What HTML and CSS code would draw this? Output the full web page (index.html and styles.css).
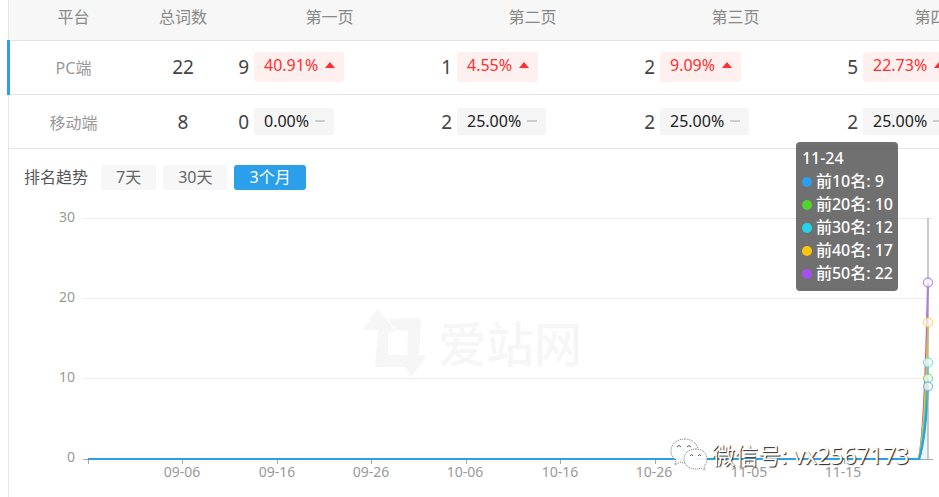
FILE: index.html
```html
<!DOCTYPE html>
<html lang="zh-CN">
<head>
    <meta charset="UTF-8">
    <meta name="viewport" content="width=device-width, initial-scale=1.0">
    <title>排名趋势</title>
    <link rel="stylesheet" href="styles.css">
</head>
<body>

<div class="panel">
    <div class="table-wrap">
        <table class="rank-table">
            <colgroup>
                <col class="col-platform">
                <col class="col-total">
                <col class="col-page">
                <col class="col-page">
                <col class="col-page">
                <col class="col-page">
            </colgroup>
            <thead>
                <tr>
                    <th>平台</th>
                    <th>总词数</th>
                    <th>第一页</th>
                    <th>第二页</th>
                    <th>第三页</th>
                    <th>第四页</th>
                </tr>
            </thead>
            <tbody>
                <tr class="active">
                    <td class="platform">PC端</td>
                    <td class="total">22</td>
                    <td><div class="cell"><span class="num">9</span><span class="tag up">40.91%<i class="arrow"></i></span></div></td>
                    <td><div class="cell"><span class="num">1</span><span class="tag up">4.55%<i class="arrow"></i></span></div></td>
                    <td><div class="cell"><span class="num">2</span><span class="tag up">9.09%<i class="arrow"></i></span></div></td>
                    <td><div class="cell"><span class="num">5</span><span class="tag up">22.73%<i class="arrow"></i></span></div></td>
                </tr>
                <tr>
                    <td class="platform">移动端</td>
                    <td class="total">8</td>
                    <td><div class="cell"><span class="num">0</span><span class="tag">0.00%<i class="dash"></i></span></div></td>
                    <td><div class="cell"><span class="num">2</span><span class="tag">25.00%<i class="dash"></i></span></div></td>
                    <td><div class="cell"><span class="num">2</span><span class="tag">25.00%<i class="dash"></i></span></div></td>
                    <td><div class="cell"><span class="num">2</span><span class="tag">25.00%<i class="dash"></i></span></div></td>
                </tr>
            </tbody>
        </table>
    </div>

    <div class="trend-bar">
        <span class="trend-title">排名趋势</span>
        <button type="button">7天</button>
        <button type="button">30天</button>
        <button type="button" class="current">3个月</button>
    </div>

    <div class="chart">
        <svg class="plot" viewBox="0 0 930 280">
            <!-- site logo behind the lines -->
            <g class="logo">
                <path d="M369 99 L387 122 L379 122 L379 145 L394 145 L401 157 L370 157 Q366 157 366 153 L369 120 L353 120 Z"/>
                <path d="M378 109 L410 108 Q413 109 412 113 L410 145 L418 146 L402 167 L391 145 L398 145 L399 121 L387 120 Z"/>
                <text x="429" y="152">爱站网</text>
            </g>

            <g class="grid">
                <path d="M74 8.500H924M74 88.500H924M74 168.500H924"/>
            </g>
            <path class="axis" d="M74 249.500H924M79.500 249v5M173.500 249v5M268.500 249v5M362.500 249v5M457.500 249v5M551.500 249v5M646.500 249v5M740.500 249v5M835.500 249v5"/>

            <g class="label y-label">
                <text x="66" y="12">30</text>
                <text x="66" y="92">20</text>
                <text x="66" y="172">10</text>
                <text x="66" y="252">0</text>
            </g>
            <g class="label x-label">
                <text x="173" y="267">09-06</text>
                <text x="268" y="267">09-16</text>
                <text x="362" y="267">09-26</text>
                <text x="456" y="267">10-06</text>
                <text x="551" y="267">10-16</text>
                <text x="645" y="267">10-26</text>
                <text x="740" y="267">11-05</text>
                <text x="834" y="267">11-15</text>
            </g>

            <path class="area" d="M910 249C914 238 917 222 919 177V249Z"/>
            <g class="line">
                <path stroke="#a74eee" d="M79 249H910C914 228 917 170 919 73"/>
                <path stroke="#fdc60a" d="M79 249H910C914 230 917 190 919 113"/>
                <path stroke="#21d6e8" d="M79 249H910C914 234 917 206 919 153"/>
                <path stroke="#54d22d" d="M79 249H910C914 236 917 218 919 169"/>
                <path stroke="#2b9fea" d="M79 249H910C914 238 917 222 919 177"/>
            </g>
            <path class="pointer" d="M919 8V249"/>
            <g class="dot">
                <circle stroke="#b25cf0" cx="919" cy="72.500" r="4.500"/>
                <circle stroke="#fdd32f" cx="919" cy="112.500" r="4.500"/>
                <circle stroke="#4adfee" cx="919" cy="152.500" r="4.500"/>
                <circle stroke="#6bd84a" cx="919" cy="168.500" r="4.500"/>
                <circle stroke="#4aaeee" cx="919" cy="176.500" r="4.500"/>
            </g>
        </svg>

        <div class="tooltip">
            <p>11-24</p>
            <ul>
                <li class="top10">前10名: 9</li>
                <li class="top20">前20名: 10</li>
                <li class="top30">前30名: 12</li>
                <li class="top40">前40名: 17</li>
                <li class="top50">前50名: 22</li>
            </ul>
        </div>

        <div class="wechat">
            <svg width="38" height="34" viewBox="0 0 38 34">
                <path class="bubble" d="M15 1C7 1 1 6 1 13c0 4 2 7 5 9l-1 5 5-3c2 1 4 1 6 1 7 0 12-5 12-12S22 1 15 1Z"/>
                <path class="bubble" d="M26 11c-7 0-12 4-12 10s5 10 12 10c2 0 3 0 5-1l4 2-1-4c2-2 3-4 3-7 0-6-5-10-11-10Z"/>
                <path class="eye" d="M7 9q2-3 4 0M17 9q2-3 4 0M20 18q2-3 3 0M28 18q2-3 3 0"/>
            </svg>
            <span>微信号: vx2567173</span>
        </div>
    </div>
</div>

</body>
</html>
```
FILE: styles.css
```css
* {
    box-sizing: border-box;
    margin: 0;
    padding: 0;
}

body {
    font-family: "Noto Sans", "Noto Sans CJK SC", sans-serif;
    font-size: 16px;
    background: #fff;
    color: #555;
    overflow-x: hidden;
}

.panel {
    margin-left: 8px;
    min-height: 100vh;
    border-left: 1px solid #e4e4e4;
}

/* the table is wider than the panel and gets cut on the right */
.table-wrap {
    margin-left: -2px;
    padding-left: 2px;
    overflow: hidden;
}

.rank-table {
    width: 1031px;
    table-layout: fixed;
    border-collapse: separate;
    border-spacing: 0;
}

.col-platform {
    width: 129px;
}

.col-total {
    width: 90px;
}

.col-page {
    width: 203px;
}

th {
    height: 41px;
    padding-bottom: 6px;
    background: #f7f7f7;
    border-bottom: 1px solid #e4e4e4;
    color: #888;
    font-weight: normal;
    line-height: 34px;
}

td {
    height: 54px;
    border-bottom: 1px solid #e4e4e4;
    vertical-align: middle;
}

.active td {
    padding-bottom: 2px;
}

.platform {
    position: relative;
    color: #999;
    text-align: center;
}

.active .platform::before {
    content: "";
    position: absolute;
    left: -2px;
    top: -1px;
    bottom: -1px;
    width: 3px;
    background: #2b9fea;
}

.total {
    color: #444;
    font-size: 19px;
    text-align: center;
}

.cell {
    display: flex;
    align-items: center;
    gap: 5px;
}

.num {
    width: 21px;
    color: #444;
    font-size: 19px;
    text-align: right;
}

.tag {
    display: flex;
    align-items: center;
    gap: 6px;
    padding: 0 9px 0 10px;
    background: #f5f5f5;
    border-radius: 3px;
    color: #222;
    line-height: 27px;
}

.tag.up {
    gap: 7px;
    padding-bottom: 3px;
    background: #fff0f0;
    color: #fd2f2f;
}

.arrow {
    border: 5px solid transparent;
    border-top: 0;
    border-bottom: 6px solid #fd2f2f;
}

.dash {
    width: 10px;
    height: 2px;
    margin-bottom: 2px;
    background: #ccc;
}

.trend-bar {
    display: flex;
    align-items: center;
    gap: 7px;
    padding: 16px 15px 20px;
}

.trend-title {
    margin-right: 6px;
    line-height: 25px;
}

button {
    height: 25px;
    padding: 0 15px;
    border: none;
    border-radius: 3px;
    background: #f7f7f7;
    color: #666;
    font: inherit;
    line-height: 25px;
    cursor: pointer;
}

button.current {
    background: #2b9fea;
    color: #fff;
}

.chart {
    position: relative;
}

.plot {
    display: block;
    width: 100%;
}

.logo {
    fill: #f6f6f6;
}

.logo text {
    font-size: 48px;
    font-weight: 500;
}

.grid {
    stroke: #ededed;
}

.axis {
    fill: none;
    stroke: #aaa;
}

.label {
    fill: #999;
    font-size: 14px;
}

.y-label {
    text-anchor: end;
}

.x-label {
    text-anchor: middle;
}

.area {
    fill: #2b9fea;
    opacity: 0.1;
}

.line {
    fill: none;
    stroke-width: 2;
}

.pointer {
    stroke: #aaa;
    stroke-width: 2;
    opacity: 0.6;
}

.dot {
    fill: #fff;
    fill-opacity: 0.7;
    stroke-width: 1;
}

.tooltip {
    position: absolute;
    top: -68px;
    right: 41px;
    padding: 5px 5px 6px 6px;
    background: rgba(80, 80, 80, 0.82);
    border-radius: 4px;
    color: #fff;
    font-weight: 500;
    line-height: 23px;
    white-space: nowrap;
}

.tooltip ul {
    list-style: none;
}

.tooltip li {
    display: flex;
    align-items: center;
    gap: 4px;
}

.tooltip li::before {
    content: "";
    width: 10px;
    height: 10px;
    border-radius: 5px;
    background: #2b9fea;
}

.tooltip .top20::before {
    background: #54d22d;
}

.tooltip .top30::before {
    background: #21d6e8;
}

.tooltip .top40::before {
    background: #fdc60a;
}

.tooltip .top50::before {
    background: #a74eee;
}

.wechat {
    position: absolute;
    right: 30px;
    bottom: 18px;
    display: flex;
    align-items: center;
    gap: 4px;
    color: #fff;
    font-size: 23px;
    line-height: 34px;
    text-shadow: 1px 1px 1px #222;
    white-space: nowrap;
}

.bubble {
    fill: #fff;
    fill-opacity: 0.9;
    stroke: #777;
    stroke-dasharray: 1 1;
}

.eye {
    fill: none;
    stroke: #555;
}
```
